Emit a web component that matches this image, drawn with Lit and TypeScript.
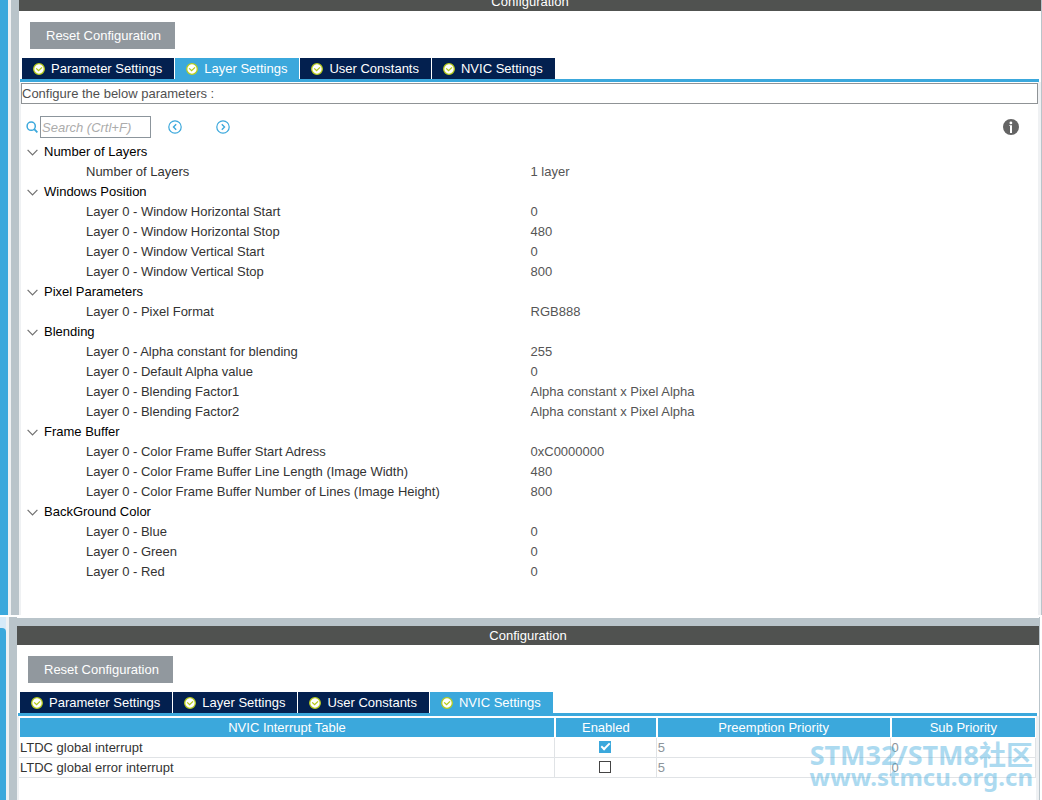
import { LitElement, html, css, svg } from "lit";
import { customElement, property, state } from "lit/decorators.js";
import { classMap } from "lit/directives/class-map.js";

interface Group {
  title: string;
  rows: [string, string][];
}

const GROUPS: Group[] = [
  { title: "Number of Layers", rows: [["Number of Layers", "1 layer"]] },
  {
    title: "Windows Position",
    rows: [
      ["Layer 0 - Window Horizontal Start", "0"],
      ["Layer 0 - Window Horizontal Stop", "480"],
      ["Layer 0 - Window Vertical Start", "0"],
      ["Layer 0 - Window Vertical Stop", "800"],
    ],
  },
  { title: "Pixel Parameters", rows: [["Layer 0 - Pixel Format", "RGB888"]] },
  {
    title: "Blending",
    rows: [
      ["Layer 0 - Alpha constant for blending", "255"],
      ["Layer 0 - Default Alpha value", "0"],
      ["Layer 0 - Blending Factor1", "Alpha constant x Pixel Alpha"],
      ["Layer 0 - Blending Factor2", "Alpha constant x Pixel Alpha"],
    ],
  },
  {
    title: "Frame Buffer",
    rows: [
      ["Layer 0 - Color Frame Buffer Start Adress", "0xC0000000"],
      ["Layer 0 - Color Frame Buffer Line Length (Image Width)", "480"],
      ["Layer 0 - Color Frame Buffer Number of Lines (Image Height)", "800"],
    ],
  },
  {
    title: "BackGround Color",
    rows: [
      ["Layer 0 - Blue", "0"],
      ["Layer 0 - Green", "0"],
      ["Layer 0 - Red", "0"],
    ],
  },
];

const INTERRUPTS = [
  { name: "LTDC global interrupt", enabled: true, preemption: 5, sub: 0 },
  { name: "LTDC global error interrupt", enabled: false, preemption: 5, sub: 0 },
];

const TABS = ["Parameter Settings", "Layer Settings", "User Constants", "NVIC Settings"];

const reset = css`
  *,
  *::before {
    box-sizing: border-box;
  }
  button {
    border: 0;
    padding: 0;
    background: none;
    color: inherit;
    font: inherit;
    cursor: pointer;
  }
  svg {
    display: block;
    flex: none;
  }
  table {
    width: 100%;
    border-collapse: separate;
    border-spacing: 0;
    table-layout: fixed;
  }
  th,
  td {
    padding: 0;
    text-align: left;
    font-weight: normal;
    white-space: nowrap;
  }
`;

/** Title bar, reset button and tab strip shared by every configuration pane. */
@customElement("config-panel")
export class ConfigPanel extends LitElement {
  @property({ type: Number }) active = 0;

  static styles = [
    reset,
    css`
      :host {
        display: flex;
        flex-direction: column;
        background: #fff;
      }
      .title {
        margin: 0;
        background: #505250;
        color: #fff;
        font-size: 13px;
        font-weight: normal;
        line-height: 19px;
        text-align: center;
      }
      .actions {
        padding: 11px 11px 9px;
      }
      .reset {
        display: block;
        height: 27px;
        padding: 0 14px 0 16px;
        background: #91989e;
        color: #fff;
      }
      .tabs {
        display: flex;
        gap: 1px;
        padding-left: 2px;
        margin: 0 2px 0 1px;
        border-bottom: 3px solid #3ba8dc;
      }
      .tab {
        display: flex;
        align-items: center;
        gap: 6px;
        height: 21px;
        padding: 0 12px 0 11px;
        background: #03204f;
        color: #fff;
      }
      .tab.active {
        background: #3ba8dc;
      }
      .body {
        flex: 1;
        border: solid #eff1f3;
        border-width: 0 3px 0 2px;
      }
    `,
  ];

  render() {
    return html`
      <h2 class="title">Configuration</h2>
      <div class="actions"><button class="reset">Reset Configuration</button></div>
      <div class="tabs" role="tablist">
        ${TABS.map(
          (label, i) => html`<button
            role="tab"
            aria-selected=${i === this.active}
            class=${classMap({ tab: true, active: i === this.active })}
            @click=${() => (this.active = i)}
          >
            <svg width="12" height="12" viewBox="0 0 12 12" aria-hidden="true">
              <circle cx="6" cy="6" r="5.3" fill="#fff" stroke="#b9cd1c" stroke-width="1.3" />
              <path d="M3.2 5.4 5.6 7.7 9 4.4" fill="none" stroke="#b4c914" stroke-width="1.3" />
            </svg>
            <span>${label}</span>
          </button>`,
        )}
      </div>
      <div class="body"><slot></slot></div>
    `;
  }
}

@customElement("layer-settings")
export class LayerSettings extends LitElement {
  @state() private closed = new Set<string>();

  static styles = [
    reset,
    css`
      :host {
        display: block;
        padding-top: 1px;
      }
      .hint {
        margin: 0;
        border: 1px solid #8f9396;
        line-height: 19px;
        color: #505050;
      }
      .tools {
        display: flex;
        align-items: center;
        padding: 12px 19px 4px 5px;
      }
      .search {
        width: 111px;
        height: 22px;
        margin: 0 17px 0 2px;
        padding: 0 1px;
        border: 1px solid #8c959c;
        border-radius: 0;
        background: #fff;
        font: italic 13px "Liberation Sans", Arial, sans-serif;
        outline: 0;
      }
      .search::placeholder {
        color: #acacac;
        opacity: 1;
      }
      .next {
        margin-left: 34px;
      }
      .info {
        margin-left: auto;
      }
      .names {
        width: 50.1%;
      }
      td,
      th {
        height: 20px;
        line-height: 20px;
      }
      .name {
        padding-left: 65px;
        color: #333;
      }
      .value {
        color: #555;
      }
      .group {
        display: flex;
        align-items: center;
        gap: 6px;
        padding-left: 6px;
        color: #000;
      }
      .shut svg {
        transform: rotate(-90deg);
      }
    `,
  ];

  private toggle(title: string) {
    const next = new Set(this.closed);
    if (!next.delete(title)) next.add(title);
    this.closed = next;
  }

  private arrow(points: string) {
    return html`<svg width="14" height="14" viewBox="0 0 14 14" fill="none" stroke="#3ba8dc" aria-hidden="true">
      <circle cx="7" cy="7" r="6.2" stroke-width="1.2" />
      ${svg`<path d=${points} stroke-width="1.4" />`}
    </svg>`;
  }

  render() {
    return html`
      <p class="hint">Configure the below parameters :</p>
      <div class="tools">
        <label for="search" aria-label="Search">
          <svg width="12" height="12" viewBox="0 0 12 12" fill="none" stroke="#3ba8dc">
            <circle cx="5.2" cy="5.2" r="4.1" stroke-width="1.5" />
            <path d="m8.2 8.2 3.2 3.2" stroke-width="1.8" />
          </svg>
        </label>
        <input id="search" class="search" type="text" placeholder="Search (Crtl+F)" />
        <button aria-label="Previous match">${this.arrow("M8.2 4.3 5.5 7l2.7 2.7")}</button>
        <button class="next" aria-label="Next match">${this.arrow("M5.8 4.3 8.5 7 5.8 9.7")}</button>
        <button class="info" aria-label="Information">
          <svg width="16" height="16" viewBox="0 0 16 16">
            <circle cx="8" cy="8" r="8" fill="#646464" />
            <circle cx="7.9" cy="3.9" r="1.4" fill="#fff" />
            <path d="M6.2 6.3H9V14H7V7H6.2z" fill="#fff" />
          </svg>
        </button>
      </div>
      <table>
        <colgroup>
          <col class="names" />
          <col />
        </colgroup>
        ${GROUPS.map((g) => {
          const shut = this.closed.has(g.title);
          return html`<tbody>
            <tr>
              <th colspan="2">
                <button
                  class=${classMap({ group: true, shut })}
                  aria-expanded=${!shut}
                  @click=${() => this.toggle(g.title)}
                >
                  <svg width="11" height="7" viewBox="0 0 11 7" aria-hidden="true">
                    <path d="M.6.9 5.5 5.8 10.4.9" fill="none" stroke="#707070" stroke-width="1.2" />
                  </svg>
                  ${g.title}
                </button>
              </th>
            </tr>
            ${shut
              ? null
              : g.rows.map(
                  ([name, value]) => html`<tr>
                    <td class="name">${name}</td>
                    <td class="value">${value}</td>
                  </tr>`,
                )}
          </tbody>`;
        })}
      </table>
    `;
  }
}

/** Interrupt table with enable flags and priorities. */
@customElement("nvic-settings")
export class NvicSettings extends LitElement {
  static styles = [
    reset,
    css`
      :host {
        display: block;
        padding-top: 1px;
      }
      .enabled {
        width: 10%;
      }
      .preemption {
        width: 23%;
      }
      .sub {
        width: 14.3%;
      }
      th {
        height: 21px;
        border: 1px solid #fff;
        background: #3ba8dc;
        color: #fff;
        line-height: 19px;
        text-align: center;
      }
      td {
        height: 20px;
        padding-left: 1px;
        border: solid #e0e3e6;
        border-width: 0 1px 1px 0;
        color: #333;
        line-height: 19px;
      }
      .number {
        color: #8d959b;
      }
      .toggle {
        padding: 0 1px 1px 0;
      }
      .check {
        appearance: none;
        display: block;
        width: 12px;
        height: 12px;
        margin: 0 auto;
        border: 1px solid #444;
        background: #fff;
      }
      .check:checked {
        border-color: #3ba8dc;
        background: #3ba8dc;
      }
      .check:checked::before {
        content: "";
        display: block;
        width: 9px;
        height: 5px;
        margin: 1px 0 0 1px;
        border: solid #fff;
        border-width: 0 0 2px 2px;
        transform: rotate(-45deg);
      }
    `,
  ];

  render() {
    return html`<table>
      <colgroup>
        <col />
        <col class="enabled" />
        <col class="preemption" />
        <col class="sub" />
      </colgroup>
      <thead>
        <tr>
          <th>NVIC Interrupt Table</th>
          <th>Enabled</th>
          <th>Preemption Priority</th>
          <th>Sub Priority</th>
        </tr>
      </thead>
      <tbody>
        ${INTERRUPTS.map(
          (r) => html`<tr>
            <td>${r.name}</td>
            <td class="toggle">
              <input class="check" type="checkbox" aria-label=${`Enable ${r.name}`} .checked=${r.enabled} />
            </td>
            <td class="number">${r.preemption}</td>
            <td class="number">${r.sub}</td>
          </tr>`,
        )}
      </tbody>
    </table>`;
  }
}

@customElement("app-root")
export class AppRoot extends LitElement {
  static styles = [
    reset,
    css`
      :host {
        position: relative;
        display: flex;
        flex-direction: column;
        min-height: 100vh;
        overflow: hidden;
        background: #fff;
        color: #333;
        font: 13px "Liberation Sans", Arial, sans-serif;
      }
      .pane {
        display: flex;
      }
      .upper {
        overflow: hidden;
        border-right: 1px solid #b9c4ca;
      }
      .upper .panel {
        margin-top: -8px;
        padding-bottom: 0;
      }
      .upper layer-settings {
        padding-bottom: 33px;
      }
      .lower {
        flex: 1;
        margin: 2px 2px 0 0;
        border-right: 1px solid #b9c4ca;
      }
      .rail {
        flex: none;
        width: 8px;
        background: #3ba8dc;
      }
      .lower .rail {
        width: 6px;
        padding-top: 11px;
        background: #d6eaf8;
      }
      .scroll {
        height: 100%;
        border-top-right-radius: 4px;
        background: #3ba8dc;
      }
      .divider {
        flex: none;
        width: 11px;
        border-left: 3px solid #eff1f3;
        background: #b9c4ca;
      }
      .panel {
        flex: 1;
        min-width: 0;
      }
      .lower .panel {
        margin-top: 1px;
        border-top: 8px solid #b9c4ca;
      }
      .watermark {
        position: absolute;
        right: 9px;
        bottom: 12px;
        color: #3ba8dc;
        opacity: 0.42;
        font: bold 24px/22px "Noto Sans", "Noto Sans CJK SC", sans-serif;
        text-align: right;
        white-space: nowrap;
        pointer-events: none;
      }
      .brand {
        font-size: 27px;
      }
    `,
  ];

  render() {
    return html`
      <section class="pane upper">
        <div class="rail"></div>
        <div class="divider"></div>
        <config-panel class="panel" .active=${1}><layer-settings></layer-settings></config-panel>
      </section>
      <section class="pane lower">
        <div class="rail"><div class="scroll"></div></div>
        <div class="divider"></div>
        <config-panel class="panel" .active=${3}><nvic-settings></nvic-settings></config-panel>
      </section>
      <div class="watermark">
        <div class="brand">STM32/STM8社区</div>
        <div>www.stmcu.org.cn</div>
      </div>
    `;
  }
}
